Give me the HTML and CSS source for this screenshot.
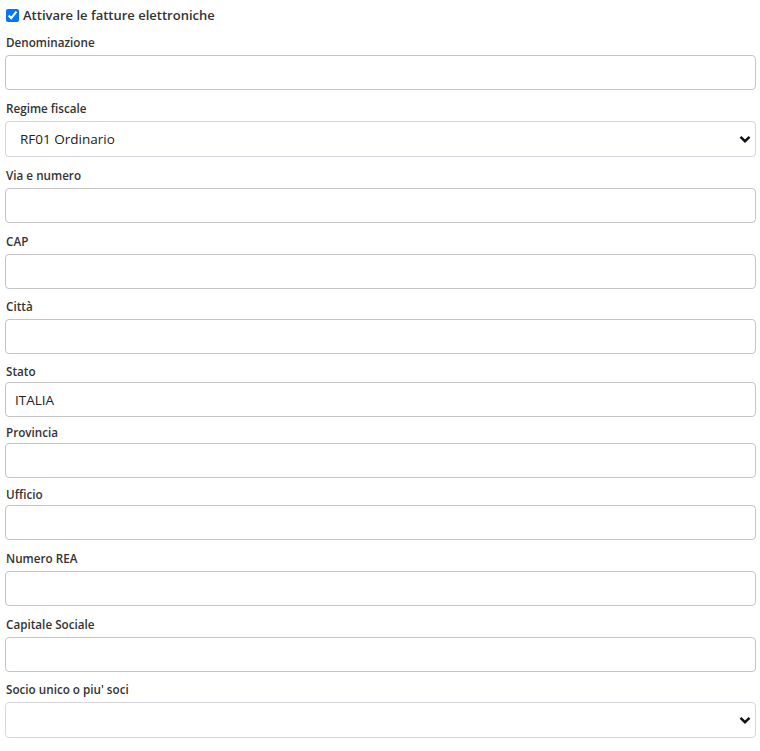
FILE: index.html
```html
<!DOCTYPE html>
<html lang="it">
<head>
<meta charset="utf-8">
<title>Fatture elettroniche</title>
<link rel="stylesheet" href="styles.css">
</head>
<body>
<form class="form">
  <label class="check">
    <input type="checkbox" class="check-box" checked>
    <span>Attivare le fatture elettroniche</span>
  </label>

  <div class="field first">
    <label class="label">Denominazione</label>
    <input class="control" type="text">
  </div>

  <div class="field">
    <label class="label">Regime fiscale</label>
    <select class="control select">
      <option>RF01 Ordinario</option>
    </select>
  </div>

  <div class="field">
    <label class="label">Via e numero</label>
    <input class="control" type="text">
  </div>

  <div class="field">
    <label class="label">CAP</label>
    <input class="control" type="text">
  </div>

  <div class="field snug">
    <label class="label">Città</label>
    <input class="control" type="text">
  </div>

  <div class="field tight first-tight">
    <label class="label">Stato</label>
    <input class="control" type="text" value="ITALIA">
  </div>

  <div class="field tight">
    <label class="label">Provincia</label>
    <input class="control" type="text">
  </div>

  <div class="field tight last-tight">
    <label class="label">Ufficio</label>
    <input class="control" type="text">
  </div>

  <div class="field">
    <label class="label">Numero REA</label>
    <input class="control" type="text">
  </div>

  <div class="field">
    <label class="label">Capitale Sociale</label>
    <input class="control" type="text">
  </div>

  <div class="field snug">
    <label class="label">Socio unico o piu' soci</label>
    <select class="control select">
      <option></option>
    </select>
  </div>
</form>
</body>
</html>
```
FILE: styles.css
```css
* { box-sizing: border-box; }

html, body {
  margin: 0;
  background: #ffffff;
}

body {
  font-family: "Open Sans", "Noto Sans", "Liberation Sans", sans-serif;
  color: #333333;
}

.form {
  display: flex;
  flex-direction: column;
  padding: 4px 4px 0 5px;
}

.check {
  display: flex;
  align-items: center;
  gap: 4px;
  height: 22px;
  padding-left: 1px;
  font-size: 13px;
  font-weight: 600;
  color: #333333;
}

.check-box {
  margin: 0;
  width: 13px;
  height: 13px;
  accent-color: #0075ff;
}

.field {
  display: flex;
  flex-direction: column;
  margin-top: 9px;
}

.field.first {
  margin-top: 7px;
}

.field.snug {
  margin-top: 8px;
}

.field.tight {
  margin-top: 6px;
}

.field.first-tight {
  margin-top: 8px;
}

.field.last-tight {
  margin-top: 7px;
}

.label {
  display: block;
  font-size: 11.7px;
  font-weight: 560;
  line-height: 18px;
  margin: 0 0 4px 1px;
  color: #333333;
}

.field.tight .label {
  margin-bottom: 2px;
}

.control {
  display: block;
  width: 100%;
  height: 35px;
  margin: 0;
  padding: 0 9px;
  font-family: inherit;
  font-size: 13.5px;
  color: #222222;
  background: #ffffff;
  border: 1px solid #c4c4c4;
  border-radius: 4px;
  outline: none;
}

.select {
  height: 36px;
  padding: 0 30px 0 14px;
  border-color: #d6d6dc;
  -webkit-appearance: none;
  appearance: none;
  background-image: url("data:image/svg+xml,%3Csvg xmlns='http://www.w3.org/2000/svg' width='12' height='8' viewBox='0 0 12 8'%3E%3Cpath d='M1.5 1.8 6 6.2 10.5 1.8' fill='none' stroke='%23111' stroke-width='2.4'/%3E%3C/svg%3E");
  background-repeat: no-repeat;
  background-position: right 4px center;
  background-size: 12px 8px;
}
```
